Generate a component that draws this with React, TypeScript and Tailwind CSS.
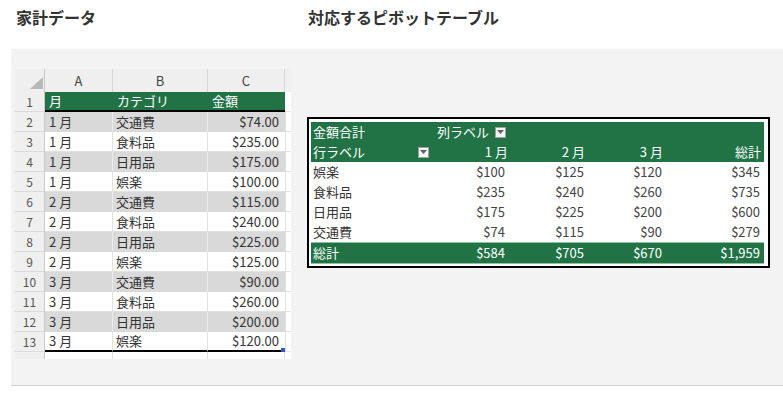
import React from "react";

const sheetRows: [string, string, string][] = [
  ["1 月", "交通費", "$74.00"],
  ["1 月", "食料品", "$235.00"],
  ["1 月", "日用品", "$175.00"],
  ["1 月", "娯楽", "$100.00"],
  ["2 月", "交通費", "$115.00"],
  ["2 月", "食料品", "$240.00"],
  ["2 月", "日用品", "$225.00"],
  ["2 月", "娯楽", "$125.00"],
  ["3 月", "交通費", "$90.00"],
  ["3 月", "食料品", "$260.00"],
  ["3 月", "日用品", "$200.00"],
  ["3 月", "娯楽", "$120.00"],
];

const pivotRows: [string, string, string, string, string][] = [
  ["娯楽", "$100", "$125", "$120", "$345"],
  ["食料品", "$235", "$240", "$260", "$735"],
  ["日用品", "$175", "$225", "$200", "$600"],
  ["交通費", "$74", "$115", "$90", "$279"],
];

function Dropdown() {
  return (
    <div className="w-[11px] h-[11px] bg-[#f4f4f4] border border-[#a0a0a0] flex items-center justify-center">
      <svg width="7" height="4" viewBox="0 0 7 4">
        <path d="M0 0 L7 0 L3.5 4 Z" fill="#606060" />
      </svg>
    </div>
  );
}

function Sheet() {
  return (
    <div className="mt-[20px] ml-[4px] w-[276px] text-[13px] text-[#333]">
      {/* header */}
      <div className="flex h-[23px] bg-[#efefef] text-[#444]">
        <div className="w-[30px] border-r border-[#c8c8c8] relative">
          <svg className="absolute left-[15px] top-[8px]" width="13" height="12" viewBox="0 0 13 12">
            <path d="M13 0 L13 12 L0 12 Z" fill="#b9b9b9" />
          </svg>
        </div>
        <div className="w-[68px] border-r border-[#d6d6d6] flex items-center justify-center">A</div>
        <div className="w-[95px] border-r border-[#d6d6d6] flex items-center justify-center">B</div>
        <div className="w-[77px] border-r border-[#d6d6d6] flex items-center justify-center">C</div>
        <div className="w-[6px]" />
      </div>
      {/* row 1 */}
      <div className="flex h-[20px]">
        <div className="w-[30px] bg-[#efefef] border-r border-b border-r-[#c8c8c8] border-b-[#dadada] flex items-center justify-center text-[12px] text-[#555]">1</div>
        <div className="w-[68px] bg-[#217346] border-b-2 border-black text-white flex items-center pl-[4px]">月</div>
        <div className="w-[95px] bg-[#217346] border-b-2 border-black text-white flex items-center pl-[4px]">カテゴリ</div>
        <div className="w-[77px] bg-[#217346] border-b-2 border-black text-white flex items-center pl-[4px]">金額</div>
        <div className="w-[6px] bg-white border-b border-[#e1e1e1]" />
      </div>
      {sheetRows.map((r, i) => {
        const n = i + 2;
        const gray = n % 2 === 0;
        const last = n === 13;
        const bg = gray ? "bg-[#d9d9d9]" : "bg-white";
        const bottom = last ? "border-b-2 border-b-black" : gray ? "border-b border-b-[#d9d9d9]" : "border-b border-b-[#e1e1e1]";
        const right = gray ? "border-r border-r-[#ececec]" : "border-r border-r-[#e1e1e1]";
        return (
          <div key={n} className="flex h-[20px]">
            <div className="w-[30px] bg-[#efefef] border-r border-b border-r-[#c8c8c8] border-b-[#dadada] flex items-center justify-center text-[12px] text-[#555]">
              {n}
            </div>
            <div className={`w-[68px] ${bg} ${bottom} ${right} flex items-center pl-[4px]`}>{r[0]}</div>
            <div className={`w-[95px] ${bg} ${bottom} ${right} flex items-center pl-[3px]`}>{r[1]}</div>
            <div className={`w-[77px] ${bg} ${bottom} flex items-center justify-end pr-[6px] relative`}>
              {r[2]}
              {last && <div className="absolute right-0 bottom-[-2px] w-[4px] h-[4px] bg-[#3a55b4]" />}
            </div>
            <div className="w-[6px] bg-white border-l border-l-[#e1e1e1] border-b border-b-[#e1e1e1]" />
          </div>
        );
      })}
      {/* row 14 partial */}
      <div className="flex h-[7px]">
        <div className="w-[30px] bg-[#efefef] border-r border-[#c8c8c8]" />
        <div className="w-[68px] bg-white border-r border-[#e1e1e1]" />
        <div className="w-[95px] bg-white border-r border-[#e1e1e1]" />
        <div className="w-[77px] bg-white border-r border-[#e1e1e1]" />
        <div className="w-[6px] bg-white" />
      </div>
    </div>
  );
}

function Pivot() {
  const cols = "grid grid-cols-[122px_78px_78px_78px_97px]";
  return (
    <div className="mt-[68px] ml-[16px] w-[463px] border-2 border-black bg-white pl-[2px] pr-[4px] pt-[3px] pb-[2px] text-[13px]">
      {/* green header row 1 */}
      <div className={`${cols} h-[20px] bg-[#217346] text-white`}>
        <div className="flex items-center pl-[2px]">金額合計</div>
        <div className="flex items-center justify-between pl-[4px] pr-[5px]">
          <span>列ラベル</span>
          <Dropdown />
        </div>
        <div />
        <div />
        <div />
      </div>
      {/* green header row 2 */}
      <div className={`${cols} h-[20px] bg-[#217346] text-white`}>
        <div className="flex items-center justify-between pl-[2px] pr-[4px]">
          <span>行ラベル</span>
          <Dropdown />
        </div>
        <div className="flex items-center justify-end pr-[3px]">1 月</div>
        <div className="flex items-center justify-end pr-[4px]">2 月</div>
        <div className="flex items-center justify-end pr-[4px]">3 月</div>
        <div className="flex items-center justify-end pr-[3px]">総計</div>
      </div>
      {pivotRows.map((r) => (
        <div key={r[0]} className={`${cols} h-[20px] bg-white text-[#444]`}>
          <div className="flex items-center pl-[2px] text-[#333]">{r[0]}</div>
          <div className="flex items-center justify-end pr-[6px]">{r[1]}</div>
          <div className="flex items-center justify-end pr-[5px]">{r[2]}</div>
          <div className="flex items-center justify-end pr-[5px]">{r[3]}</div>
          <div className="flex items-center justify-end pr-[4px]">{r[4]}</div>
        </div>
      ))}
      {/* total row */}
      <div className={`${cols} h-[22px] bg-[#217346] border-y border-[#8cc39c] text-white`}>
        <div className="flex items-center pl-[2px]">総計</div>
        <div className="flex items-center justify-end pr-[6px]">$584</div>
        <div className="flex items-center justify-end pr-[5px]">$705</div>
        <div className="flex items-center justify-end pr-[5px]">$670</div>
        <div className="flex items-center justify-end pr-[4px]">$1,959</div>
      </div>
    </div>
  );
}

export default function App() {
  return (
    <div className="w-[783px] h-[395px] bg-white font-['Noto_Sans_CJK_JP','Noto_Sans',sans-serif] overflow-hidden">
      <div className="flex h-[49px] pt-[9px] text-[16px] leading-[16px] font-bold text-[#333]">
        <div className="w-[308px] pl-[16px]">家計データ</div>
        <div>対応するピボットテーブル</div>
      </div>
      <div className="ml-[11px] h-[337px] bg-[#f3f3f3] border-b border-[#d2d2d2] flex items-start">
        <Sheet />
        <Pivot />
      </div>
    </div>
  );
}
